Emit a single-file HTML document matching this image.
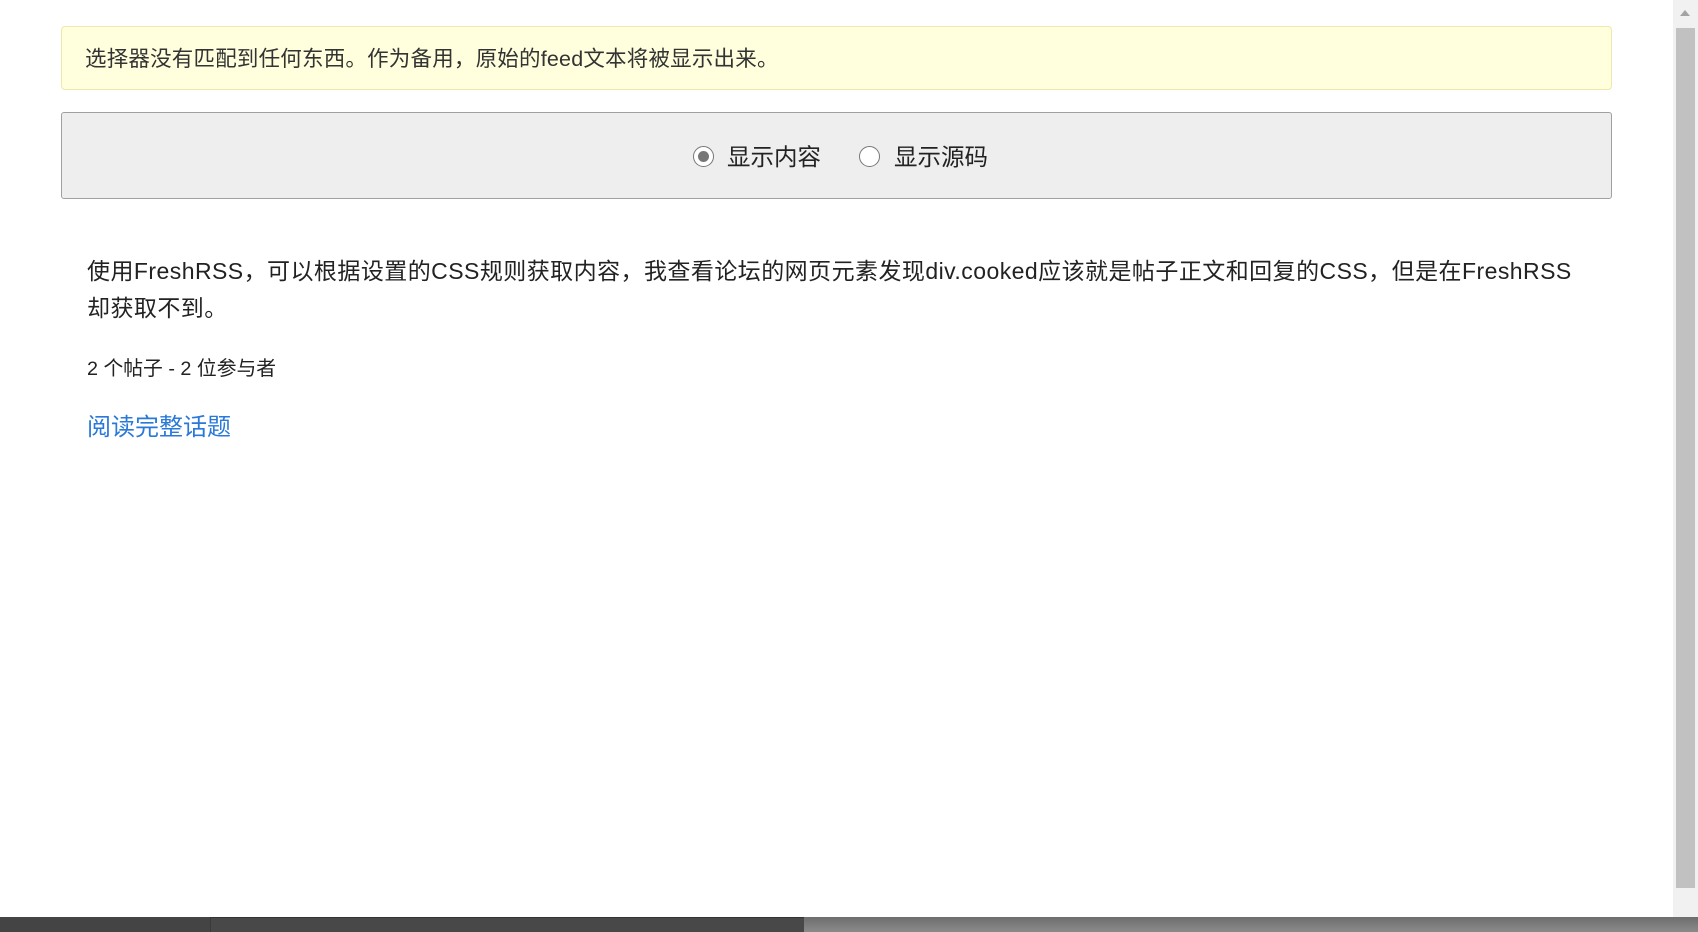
<!DOCTYPE html>
<html><head><meta charset="utf-8"><style>
html,body{margin:0;padding:0;}
body{width:1698px;height:932px;position:relative;overflow:hidden;background:#fff;font-family:"Liberation Sans","Noto Sans CJK SC",sans-serif;color:#222;}
.notice{position:absolute;left:61px;top:26px;width:1551px;height:64px;background:#ffffdd;border:1px solid #eee8aa;border-radius:4px;box-sizing:border-box;}
.notice span{position:absolute;left:23px;top:19px;font-size:21.5px;line-height:26px;color:#333;letter-spacing:0.2px;}
.tog{position:absolute;left:61px;top:112px;width:1551px;height:87px;background:#eee;border:1px solid #a0a0a0;border-radius:3px;box-sizing:border-box;}
.r{position:absolute;top:33px;width:21px;height:21px;border:1.5px solid #777;border-radius:50%;background:#fff;box-sizing:border-box;}
.r.on::after{content:"";position:absolute;left:3.5px;top:3.5px;width:11px;height:11px;border-radius:50%;background:#777;}
.lab{position:absolute;top:29px;font-size:23.5px;line-height:30px;color:#222;}
.p{position:absolute;left:87px;top:253px;width:1560px;font-size:23px;line-height:37px;color:#222;letter-spacing:0.45px;}
.m{position:absolute;left:87px;top:357px;font-size:19.8px;line-height:24px;color:#222;}
.a{position:absolute;left:87px;top:413px;font-size:24px;line-height:30px;color:#2a78d8;}
.sb{position:absolute;left:1673px;top:0;width:25px;height:917px;background:#f1f1f1;}
.th{position:absolute;left:3px;top:28px;width:19px;height:860px;background:#c1c1c1;}
.ar{position:absolute;left:7px;top:10px;width:0;height:0;border-left:5px solid transparent;border-right:5px solid transparent;border-bottom:6px solid #a3a3a3;}
.bb1{position:absolute;left:0;top:917px;width:804px;height:15px;background:#444;}
.bb1 i{position:absolute;left:210px;top:0;width:594px;height:15px;background:#484848;border-top:1px solid #333;border-left:1px solid #3a3a3a;box-sizing:border-box;}
.bb2{position:absolute;left:804px;top:917px;width:894px;height:15px;background:linear-gradient(#6e6e6e,#8a8a8a);}
</style></head><body>
<div class="notice"><span>选择器没有匹配到任何东西。作为备用，原始的feed文本将被显示出来。</span></div>
<div class="tog">
<div class="r on" style="left:631px"></div><div class="lab" style="left:665px">显示内容</div>
<div class="r" style="left:797px"></div><div class="lab" style="left:832px">显示源码</div>
</div>
<div class="p">使用FreshRSS，可以根据设置的CSS规则获取内容，我查看论坛的网页元素发现div.cooked应该就是帖子正文和回复的CSS，但是在FreshRSS<br>却获取不到。</div>
<div class="m">2 个帖子 - 2 位参与者</div>
<div class="a">阅读完整话题</div>
<div class="sb"><div class="ar"></div><div class="th"></div></div>
<div class="bb1"><i></i></div><div class="bb2"></div>
</body></html>
